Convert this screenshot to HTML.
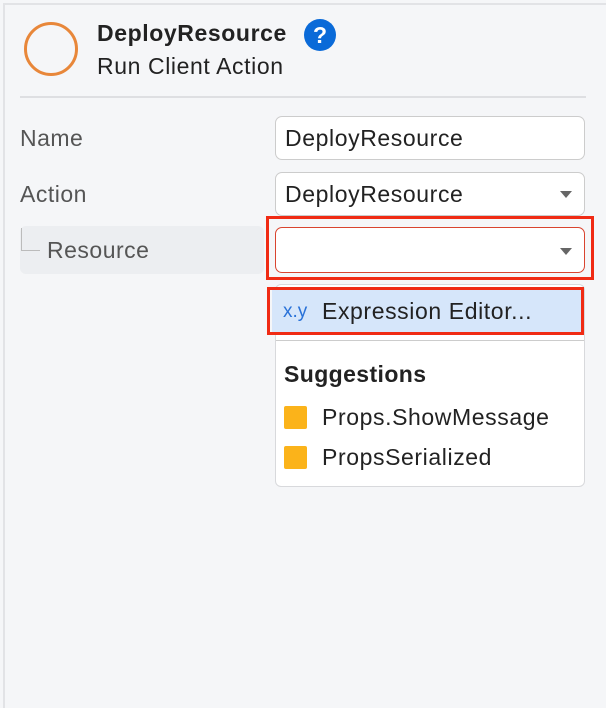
<!DOCTYPE html>
<html><head><style>
body{margin:0;width:606px;height:706px;background:#f5f6f8;font-family:"Liberation Sans",sans-serif;position:relative;overflow:hidden}
.a{position:absolute}
.t{font-size:23px;letter-spacing:0.6px}
.lbl{font-size:23px;letter-spacing:0.5px;color:#555;}
.inp{position:absolute;left:275px;width:310px;height:44px;background:#fff;border:1px solid #ccc;border-radius:7px;box-sizing:border-box;font-size:23px;letter-spacing:0.6px;color:#222;padding-left:9px;line-height:42px}
.tri{position:absolute;right:12px;top:18px;width:0;height:0;border-left:6px solid transparent;border-right:6px solid transparent;border-top:7px solid #666}
</style></head><body>
<div class="a" style="left:3px;top:3px;width:603px;height:703px;border-left:2px solid #e2e3e6;border-top:2px solid #e2e3e6"></div>
<div class="a" style="left:24px;top:22px;width:54px;height:54px;border:3px solid #e8873a;border-radius:50%;box-sizing:border-box"></div>
<div class="a" style="left:97px;top:20px;font-size:23px;letter-spacing:0.6px;font-weight:bold;color:#222">DeployResource</div>
<div class="a t" style="left:97px;top:53px;color:#222">Run Client Action</div>
<div class="a" style="left:304px;top:19px;width:32px;height:32px;border-radius:50%;background:#0a6ad8;color:#fff;font-weight:bold;font-size:23px;text-align:center;line-height:32px">?</div>
<div class="a" style="left:20px;top:96px;width:566px;height:2px;background:#dedfe2"></div>
<div class="a lbl" style="left:20px;top:125px">Name</div>
<div class="inp" style="top:116px">DeployResource</div>
<div class="a lbl" style="left:20px;top:181px">Action</div>
<div class="inp" style="top:172px">DeployResource<div class="tri"></div></div>
<div class="a" style="left:20px;top:226px;width:244px;height:48px;background:#eceef1;border-radius:6px"></div>
<div class="a" style="left:21px;top:228px;width:1px;height:22px;background:#bbb"></div>
<div class="a" style="left:21px;top:250px;width:19px;height:1px;background:#bbb"></div>
<div class="a lbl" style="left:47px;top:237px">Resource</div>
<div class="a" style="left:266px;top:216px;width:328px;height:64px;border:3px solid #f02b14;box-sizing:border-box"></div>
<div class="inp" style="top:227px;border:1.5px solid #d9442f;height:46px"><div class="tri" style="top:20px"></div></div>
<div class="a" style="left:275px;top:284px;width:310px;height:203px;background:#fff;border:1px solid #d8d9dc;border-radius:6px;box-sizing:border-box"></div>
<div class="a" style="left:272px;top:290px;width:310px;height:43px;background:#d6e6fa"></div>
<div class="a" style="left:267px;top:287px;width:317px;height:48px;border:3px solid #f02b14;box-sizing:border-box"></div>
<div class="a" style="left:283px;top:301px;font-size:19px;color:#2a72d8">x.y</div>
<div class="a t" style="left:322px;top:298px;color:#222">Expression Editor...</div>
<div class="a" style="left:276px;top:340px;width:308px;height:1px;background:#ccc"></div>
<div class="a" style="left:284px;top:361px;font-size:23px;letter-spacing:0.4px;font-weight:bold;color:#222">Suggestions</div>
<div class="a" style="left:284px;top:406px;width:23px;height:23px;background:#fbb31a;border-radius:2px"></div>
<div class="a t" style="left:322px;top:404px;color:#222">Props.ShowMessage</div>
<div class="a" style="left:284px;top:446px;width:23px;height:23px;background:#fbb31a;border-radius:2px"></div>
<div class="a t" style="left:322px;top:444px;color:#222">PropsSerialized</div>
</body></html>
